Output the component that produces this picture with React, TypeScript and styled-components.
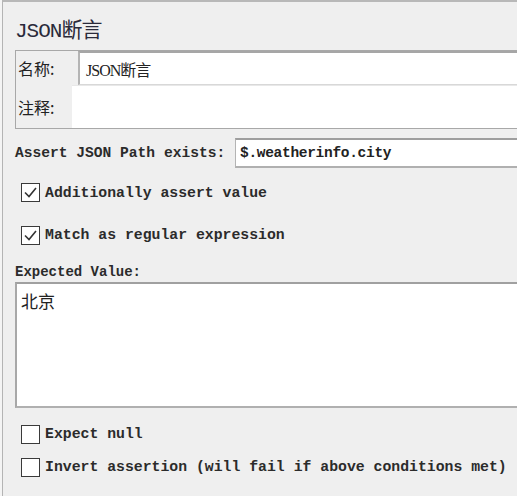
import React from "react";
import styled, { createGlobalStyle } from "styled-components";

const GlobalStyle = createGlobalStyle`
  html, body {
    margin: 0;
    padding: 0;
    background: #f0f0f0;
    overflow: hidden;
  }
`;

const MONO = `"Liberation Mono", "Noto Sans CJK SC", monospace`;
const CJK = `"Noto Sans CJK SC", "Liberation Sans", sans-serif`;

const Page = styled.div`
  width: 100%;
  height: 496px;
  padding-left: 2px;
  box-sizing: border-box;
  background: #f4f4f4;
`;

const Frame = styled.div`
  height: 100%;
  border-left: 1px solid #b4b4b4;
  border-top: 2px solid #b8b8b8;
  background: #efefef;
  padding-left: 12px;
  box-sizing: border-box;
`;

const Title = styled.div`
  height: 48px;
  display: flex;
  align-items: center;
  padding-top: 4px;
  box-sizing: border-box;
  font-family: ${MONO};
  font-size: 21px;
  color: #2a2a3a;
  letter-spacing: -1px;
`;

const NamePanel = styled.div`
  border: 1px solid #a8a8a8;
  border-right: none;
  display: flex;
  flex-direction: column;
`;

const NameRow = styled.div<{ $h: number; $label: number }>`
  display: grid;
  grid-template-columns: ${(p) => p.$label}px 1fr;
  height: ${(p) => p.$h}px;
  align-items: stretch;
`;

const CjkLabel = styled.div`
  display: flex;
  align-items: center;
  padding-left: 2px;
  font-family: ${CJK};
  font-size: 16px;
  color: #222;
`;

const Field = styled.div<{ $plain?: boolean }>`
  background: #fff;
  border-top: ${(p) => (p.$plain ? "1px solid #e8e8e8" : "2px solid #a6a6a6")};
  border-left: ${(p) => (p.$plain ? "none" : "2px solid #b4b4b4")};
  border-bottom: ${(p) => (p.$plain ? "none" : "1px solid #d8d8d8")};
  display: flex;
  align-items: center;
  padding-left: 6px;
  font-family: ${MONO};
  font-size: 15px;
  color: #222;
`;

const NameValue = styled.span`
  font-family: "Liberation Serif", "Noto Sans CJK SC", serif;
  font-size: 16px;
  letter-spacing: -1px;
`;

const PathRow = styled.div`
  display: grid;
  grid-template-columns: 220px 1fr;
  height: 30px;
  margin-top: 9px;
`;

const MonoLabel = styled.div`
  display: flex;
  align-items: center;
  font-family: ${MONO};
  font-size: 14.6px;
  font-weight: bold;
  color: #2b2b2b;
  white-space: nowrap;
`;

const PathField = styled(Field)`
  border-top: 2px solid #9e9e9e;
  border-left: 1px solid #b4b4b4;
  border-bottom: 2px solid #b0b0b0;
  padding-left: 4px;
  font-weight: bold;
  font-size: 14.5px;
  letter-spacing: -0.3px;
`;

const CheckRow = styled.label<{ $h: number }>`
  display: flex;
  align-items: center;
  gap: 5px;
  height: ${(p) => p.$h}px;
  padding-left: 6px;
  font-family: ${MONO};
  font-size: 14.8px;
  font-weight: bold;
  color: #2b2b2b;
  white-space: nowrap;
`;

const Box = styled.span`
  width: 17px;
  height: 17px;
  border: 1.5px solid #3a3a3a;
  background: #fff;
  display: flex;
  align-items: center;
  justify-content: center;
  flex-shrink: 0;
`;

const ExpectedLabel = styled(MonoLabel)`
  height: 20px;
  margin-top: 9px;
  font-size: 14px;
`;

const TextArea = styled.div`
  height: 126px;
  background: #fff;
  border-top: 2px solid #a0a0a0;
  border-left: 2px solid #a8a8a8;
  border-bottom: 2px solid #b0b0b0;
  box-sizing: border-box;
  padding: 4px 0 0 4px;
  font-family: ${CJK};
  font-size: 17px;
  color: #222;
`;

const BottomChecks = styled.div`
  padding-top: 14px;
`;

function CheckBox({ checked, label, h }: { checked: boolean; label: string; h: number }) {
  return (
    <CheckRow $h={h}>
      <Box>
        {checked && (
          <svg width="15" height="15" viewBox="0 0 15 15">
            <path d="M2 7.5 L6 11.5 L13 3" fill="none" stroke="#333" strokeWidth="1.6" />
          </svg>
        )}
      </Box>
      {label}
    </CheckRow>
  );
}

export default function App() {
  return (
    <Page>
      <GlobalStyle />
      <Frame>
        <Title>JSON断言</Title>
        <NamePanel>
          <NameRow $h={34} $label={62}>
            <CjkLabel>名称:</CjkLabel>
            <Field>
              <NameValue>JSON断言</NameValue>
            </Field>
          </NameRow>
          <NameRow $h={43} $label={56}>
            <CjkLabel>注释:</CjkLabel>
            <Field $plain />
          </NameRow>
        </NamePanel>
        <PathRow>
          <MonoLabel>Assert JSON Path exists:</MonoLabel>
          <PathField>$.weatherinfo.city</PathField>
        </PathRow>
        <CheckBox h={49} checked label="Additionally assert value" />
        <CheckBox h={36} checked label="Match as regular expression" />
        <ExpectedLabel>Expected Value:</ExpectedLabel>
        <TextArea>北京</TextArea>
        <BottomChecks>
          <CheckBox h={24} checked={false} label="Expect null" />
          <CheckBox h={42} checked={false} label="Invert assertion (will fail if above conditions met)" />
        </BottomChecks>
      </Frame>
    </Page>
  );
}
